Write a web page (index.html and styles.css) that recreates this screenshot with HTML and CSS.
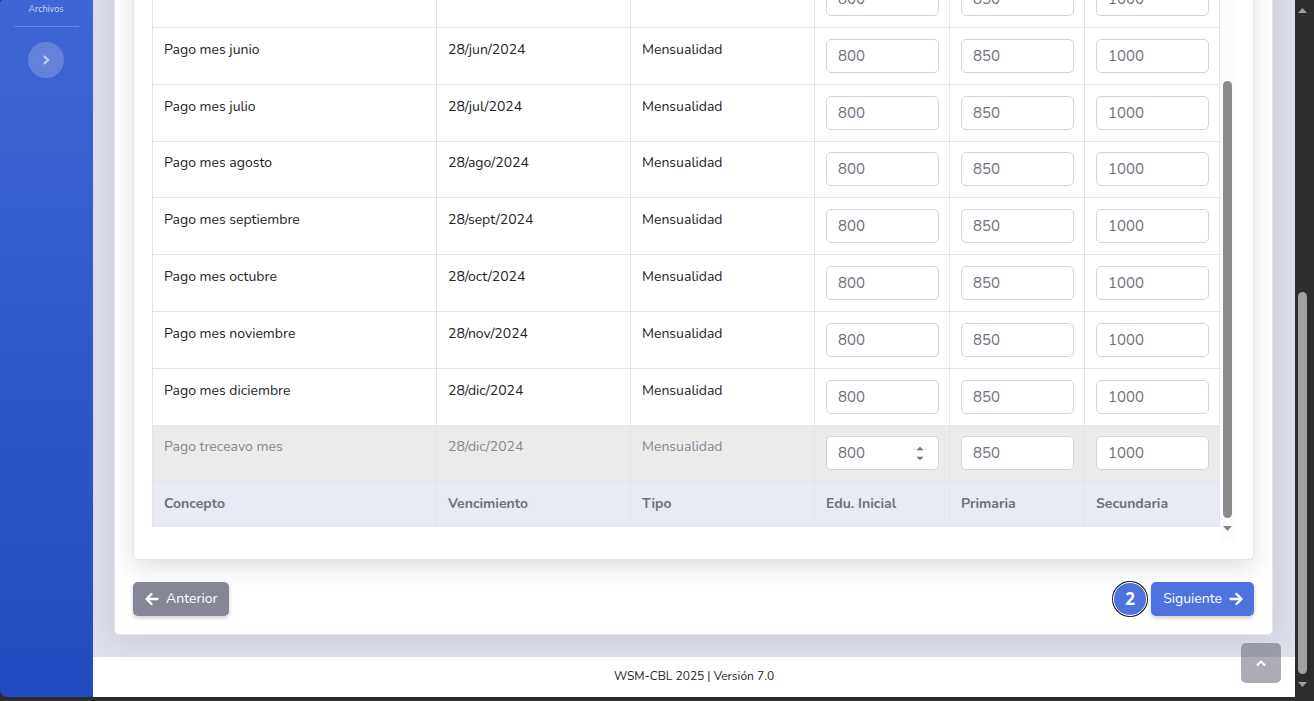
FILE: index.html
```html
<!DOCTYPE html>
<html lang="es">
<head>
<meta charset="utf-8">
<title>WSM-CBL</title>
<link rel="stylesheet" href="styles.css">
</head>
<body>
<div class="app">
  <nav class="sidebar">
    <a class="nav-link" href="#">Archivos</a>
    <hr class="divider">
    <button class="toggle" type="button" aria-label="Expandir menú">
      <svg width="8" height="10" viewBox="0 0 8 10"><path d="M2 1l4 4-4 4" fill="none" stroke="currentColor" stroke-width="2.4"/></svg>
    </button>
  </nav>
  <div class="main">
    <main class="content">
      <section class="card outer">
        <div class="card inner">
          <div class="table-pane">
            <table class="fees">
              <colgroup><col><col class="c-date"><col class="c-type"><col class="c-fee"><col class="c-fee"><col class="c-fee"></colgroup>
              <tbody id="rows"></tbody>
              <tfoot>
                <tr><th>Concepto</th><th>Vencimiento</th><th>Tipo</th><th>Edu. Inicial</th><th>Primaria</th><th>Secundaria</th></tr>
              </tfoot>
            </table>
            <div class="pane-scroll">
              <div class="thumb"></div>
              <svg width="9" height="5" viewBox="0 0 9 5"><path d="M0 0h9L4.500 5z" fill="currentColor"/></svg>
            </div>
          </div>
        </div>
        <div class="actions">
          <button class="btn secondary" type="button">
            <svg width="14" height="14" viewBox="0 0 14 14"><path d="M6.500 2L1.500 7l5 5M2 7h10.500" fill="none" stroke="currentColor" stroke-width="2.300" stroke-linecap="round" stroke-linejoin="round"/></svg>
            Anterior
          </button>
          <div class="next">
            <span class="step">2</span>
            <button class="btn primary" type="button">
              Siguiente
              <svg width="14" height="14" viewBox="0 0 14 14"><path d="M7.500 2l5 5-5 5M12 7H1.500" fill="none" stroke="currentColor" stroke-width="2.300" stroke-linecap="round" stroke-linejoin="round"/></svg>
            </button>
          </div>
        </div>
      </section>
    </main>
    <footer class="footer">WSM-CBL 2025 | Versión 7.0</footer>
    <a class="to-top" href="#" aria-label="Subir">
      <svg width="10" height="7" viewBox="0 0 10 7"><path d="M1 5.500l4-4 4 4" fill="none" stroke="currentColor" stroke-width="2.200"/></svg>
    </a>
  </div>
  <div class="page-scroll">
    <svg width="9" height="5" viewBox="0 0 9 5"><path d="M0 5h9L4.500 0z" fill="currentColor"/></svg>
    <div class="thumb"></div>
    <svg width="9" height="5" viewBox="0 0 9 5"><path d="M0 0h9L4.500 5z" fill="currentColor"/></svg>
  </div>
</div>
<script src="script.js"></script>
</body>
</html>
```
FILE: styles.css
```css
* { box-sizing: border-box; }
body {
  margin: 0;
  background: #2c2c2c;
  color: #212529;
  font: 14px/22px Nunito, "Noto Sans", sans-serif;
}
button, input { font: inherit; }
svg { display: block; flex: none; }
.app {
  display: grid;
  grid-template-columns: 93px 1fr 19px;
  height: 100vh;
  padding-bottom: 4px;
  overflow: hidden;
}
.sidebar {
  display: flex;
  flex-direction: column;
  align-items: center;
  padding-right: 1px;
  background: linear-gradient(#4066d5, #224abe);
  border-radius: 3px 0 0 7px;
}
.nav-link {
  color: #d0d9f5;
  font-size: 9px;
  line-height: 18px;
  text-decoration: none;
}
.divider {
  width: 65px;
  margin: 8px 0 15px;
  border: 0;
  border-top: 1px solid #6786dd;
}
.toggle {
  display: grid;
  place-items: center;
  width: 36px;
  height: 36px;
  padding: 0;
  border: 0;
  border-radius: 50%;
  background: #6582db;
  color: #c0ccf1;
}
.main {
  position: relative;
  display: flex;
  flex-direction: column;
  min-width: 0;
  min-height: 0;
  background: #dddfeb;
}
.content {
  flex: 1;
  min-height: 0;
  display: flex;
  flex-direction: column;
  justify-content: flex-end;
  padding: 0 22px 22px 21px;
  overflow: hidden;
}
.card {
  background: #fff;
  border: 1px solid #e3e6f0;
  border-radius: 5px;
}
.outer {
  padding: 18px;
  box-shadow: 0 2px 28px rgba(58, 59, 69, .15);
}
.inner {
  padding: 18px;
  box-shadow: 0 8px 24px rgba(0, 0, 0, .13);
}
.table-pane { display: flex; }
.fees {
  flex: 1;
  min-width: 0;
  margin-bottom: 14px;
  table-layout: fixed;
  border-spacing: 0;
  border-left: 1px solid #e3e4f0;
}
.c-date { width: 194px; }
.c-type { width: 184px; }
.c-fee { width: 135px; }
.fees td, .fees th {
  padding: 11px 10px 11px 11px;
  border: 0 solid #e3e4f0;
  border-width: 0 1px 1px 0;
  text-align: left;
  vertical-align: top;
}
.fees th { background: #e8ebf4; color: #6e707e; }
.fees .tight td { padding-top: 10px; }
.fees .hovered td { background: #ebebeb; color: #858796; }
.field { position: relative; }
.field input {
  display: block;
  width: 100%;
  height: 34px;
  padding: 0 11px;
  border: 1px solid #d1d3e2;
  border-radius: 5px;
  background: #fff;
  color: #6e707e;
  font-size: 15px;
  appearance: textfield;
}
.field input::placeholder { color: #6e707e; opacity: 1; }
.spinner {
  position: absolute;
  top: 7px;
  right: 12px;
  background: #fcfcfc;
  color: #757575;
}
.pane-scroll, .page-scroll {
  display: flex;
  flex-direction: column;
  align-items: center;
}
.thumb { width: 9px; border-radius: 5px; }
.pane-scroll {
  width: 15px;
  justify-content: flex-end;
  gap: 8px;
  padding-bottom: 10px;
  background: #fcfcfc;
  color: #858585;
}
.pane-scroll .thumb { height: 437px; background: #8b8b8b; }
.actions {
  display: flex;
  justify-content: space-between;
  margin-top: 22px;
}
.next { display: flex; align-items: center; gap: 4px; }
.btn {
  display: flex;
  align-items: center;
  gap: 7px;
  height: 34px;
  padding: 0 11px 1px 12px;
  border: 0;
  border-radius: 5px;
  color: #fff;
  box-shadow: 0 2px 4px rgba(0, 0, 0, .2);
}
.primary { background: #4e73df; }
.secondary { background: #858796; }
.step {
  display: grid;
  place-items: center;
  width: 34px;
  height: 34px;
  border: 1px solid #fff;
  border-radius: 50%;
  box-shadow: 0 0 0 1px #1b1b1b;
  background: #4e73df;
  color: #fff;
  font: 700 17px/22px "Noto Sans", sans-serif;
}
.footer {
  height: 40px;
  background: #fff;
  font-size: 12px;
  line-height: 38px;
  text-align: center;
}
.to-top {
  position: absolute;
  right: 14px;
  bottom: 14px;
  display: grid;
  place-items: center;
  width: 40px;
  height: 40px;
  border-radius: 5px;
  background: rgba(90, 92, 105, .5);
  color: #fff;
}
.page-scroll {
  justify-content: space-between;
  padding: 8px 4px 10px 0;
  color: #a0a0a0;
}
.page-scroll .thumb {
  flex: 0 0 382px;
  margin: auto 0 8px;
  background: #a0a0a0;
}
```
FILE: script.js
```javascript
const rows = [
  ["", ""],
  ["Pago mes junio", "28/jun/2024"],
  ["Pago mes julio", "28/jul/2024"],
  ["Pago mes agosto", "28/ago/2024", "tight"],
  ["Pago mes septiembre", "28/sept/2024"],
  ["Pago mes octubre", "28/oct/2024"],
  ["Pago mes noviembre", "28/nov/2024"],
  ["Pago mes diciembre", "28/dic/2024"],
  ["Pago treceavo mes", "28/dic/2024", "tight hovered"]
];
const fees = [["Edu. Inicial", 800], ["Primaria", 850], ["Secundaria", 1000]];
const spinner = '<svg class="spinner" width="14" height="20" viewBox="0 0 14 20"><path d="M4 7h6L7 4zM4 14h6l-3 3z" fill="currentColor" stroke="currentColor" stroke-width=".6"/></svg>';

document.getElementById("rows").innerHTML = rows.map(([name, due, state = ""]) =>
  `<tr class="${state}"><td>${name}</td><td>${due}</td><td>${name && "Mensualidad"}</td>` +
  fees.map(([level, fee], i) =>
    `<td><div class="field"><input type="number" placeholder="${fee}" aria-label="${level} ${name}">` +
    `${i === 0 && state.includes("hovered") ? spinner : ""}</div></td>`
  ).join("") + "</tr>"
).join("");
```
